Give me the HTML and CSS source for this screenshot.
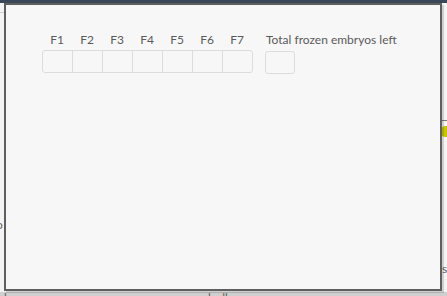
FILE: index.html
```html
<!DOCTYPE html>
<html>
<head>
<meta charset="utf-8">
<link rel="stylesheet" href="styles.css">
</head>
<body>
<div class="topbar"></div>
<div class="page">
  <div class="bg-line-left"></div>
  <div class="bg-line-right"></div>
  <div class="bg-hex"></div>
  <div class="bg-frag-left">o</div>
  <div class="bg-frag-right">s</div>
  <div class="bg-bottom"><span>alue</span><span class="b2">mm</span><span class="b3">l s ll</span></div>
</div>
<div class="dialog">
  <div class="fields">
    <div class="group">
      <div class="labels">
        <span>F1</span><span>F2</span><span>F3</span><span>F4</span><span>F5</span><span>F6</span><span>F7</span>
      </div>
      <div class="inputs">
        <div class="cell"></div><div class="cell"></div><div class="cell"></div><div class="cell"></div><div class="cell"></div><div class="cell"></div><div class="cell"></div>
      </div>
    </div>
    <div class="group total">
      <div class="labels"><span class="tl">Total frozen embryos left</span></div>
      <div class="single"></div>
    </div>
  </div>
</div>
</body>
</html>
```
FILE: styles.css
```css
html, body {
  margin: 0;
  padding: 0;
}
body {
  width: 447px;
  height: 296px;
  overflow: hidden;
  position: relative;
  background: #f4f4f4;
  font-family: Lato, "Open Sans", sans-serif;
}
.topbar {
  height: 3px;
  background: #3b4657;
}
.page {
  height: 293px;
}
.bg-line-left {
  position: absolute;
  left: 0;
  top: 12px;
  width: 4px;
  height: 1px;
  background: #cfcfcf;
}
.bg-line-right {
  position: absolute;
  left: 442px;
  top: 120px;
  width: 5px;
  height: 1px;
  background: #7a7a7a;
}
.bg-hex {
  position: absolute;
  left: 441px;
  top: 126px;
  width: 8px;
  height: 11px;
  background: #c9c800;
  clip-path: polygon(0 20%, 40% 0, 100% 0, 100% 100%, 40% 100%, 0 80%);
}
.bg-frag-left {
  position: absolute;
  left: -4px;
  top: 217px;
  font-size: 12px;
  color: #666;
}
.bg-frag-right {
  position: absolute;
  left: 442px;
  top: 261px;
  font-size: 12px;
  color: #666;
}
.bg-bottom {
  position: absolute;
  left: 0;
  top: 292px;
  width: 447px;
  height: 4px;
  overflow: hidden;
  background: #cfcfcf;
  font-size: 12px;
  color: #666;
  line-height: 12px;
}
.bg-bottom span {
  position: absolute;
  top: 0;
  left: -2px;
}
.bg-bottom .b2 { left: 90px; }
.bg-bottom .b3 { left: 208px; }

.dialog {
  position: absolute;
  left: 4px;
  top: 3px;
  width: 434px;
  height: 284px;
  border: 2px solid #5f5f5f;
  background: #f7f7f7;
  box-shadow: 2px 2px 0 rgba(0,0,0,0.15);
}
.fields {
  display: flex;
  gap: 12px;
  padding: 25px 0 0 36px;
}
.group {
  display: flex;
  flex-direction: column;
}
.labels {
  display: flex;
  height: 20px;
  font-size: 12px;
  color: #5a5a5a;
}
.labels span {
  width: 30px;
  text-align: center;
  line-height: 20px;
}
.labels .tl {
  width: auto;
  text-align: left;
  padding-left: 1px;
}
.inputs {
  display: flex;
  border: 1px solid #dcdcdc;
  border-radius: 3px;
  height: 21px;
}
.cell {
  width: 29px;
  height: 21px;
  border-right: 1px solid #dcdcdc;
}
.cell:last-child {
  border-right: none;
}
.single {
  width: 28px;
  height: 21px;
  border: 1px solid #dcdcdc;
  border-radius: 3px;
  margin-top: 1px;
}
```
